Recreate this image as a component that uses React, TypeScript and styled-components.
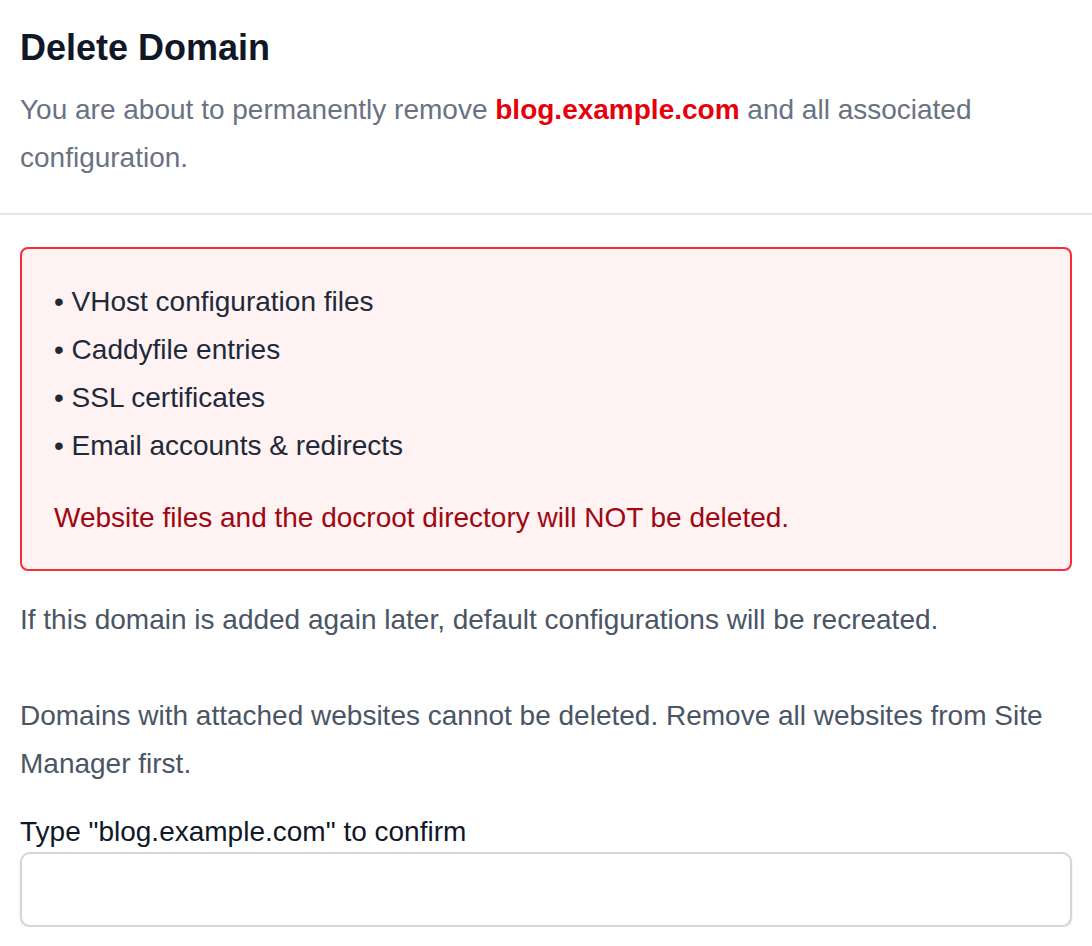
import React from "react";
import styled, { createGlobalStyle } from "styled-components";

const GlobalStyle = createGlobalStyle`
  html, body {
    margin: 0;
    padding: 0;
    background: #ffffff;
  }
  body {
    font-family: "Liberation Sans", Arial, sans-serif;
    -webkit-font-smoothing: antialiased;
  }
  * {
    box-sizing: border-box;
  }
`;

const Dialog = styled.div`
  width: 1092px;
  background: #ffffff;
`;

const Header = styled.header`
  padding: 28px 20px 31px;
  border-bottom: 2px solid #e5e7eb;
`;

const Title = styled.h2`
  margin: 0;
  font-size: 36px;
  line-height: 40px;
  font-weight: 700;
  color: #101828;
`;

const Description = styled.p`
  margin: 18px 0 0;
  font-size: 28px;
  line-height: 48px;
  color: #6a7282;
`;

const DomainName = styled.strong`
  color: #e7000b;
  font-weight: 700;
`;

const Body = styled.div`
  padding: 32px 20px 0;
`;

const Alert = styled.div`
  border: 2px solid #fb2c36;
  border-radius: 8px;
  background: #fef2f2;
  padding: 29px 32px 27px;
`;

const List = styled.ul`
  margin: 0;
  padding: 0;
  list-style: none;
`;

const Item = styled.li`
  font-size: 28px;
  line-height: 48px;
  color: #1e2939;
`;

const AlertNote = styled.p`
  margin: 24px 0 0;
  font-size: 28px;
  line-height: 48px;
  color: #9f0712;
`;

const Info = styled.p<{ $gap?: number }>`
  margin: ${(p) => p.$gap ?? 0}px 0 0;
  font-size: 28px;
  line-height: 48px;
  color: #4a5565;
`;

const Field = styled.label`
  display: block;
  margin-top: 24px;
`;

const LabelText = styled.span`
  display: block;
  font-size: 28px;
  line-height: 40px;
  color: #101828;
`;

const Input = styled.input`
  display: block;
  width: 100%;
  height: 75px;
  margin: 0;
  padding: 0 20px;
  font-family: inherit;
  font-size: 28px;
  color: #101828;
  background: #ffffff;
  border: 2px solid #d1d5dc;
  border-radius: 10px;
  box-shadow: 0 2px 3px rgba(0, 0, 0, 0.08);
  outline: none;
`;

const removed = [
  "VHost configuration files",
  "Caddyfile entries",
  "SSL certificates",
  "Email accounts & redirects",
];

export default function App() {
  const domain = "blog.example.com";
  return (
    <>
      <GlobalStyle />
      <Dialog>
        <Header>
          <Title>Delete Domain</Title>
          <Description>
            You are about to permanently remove <DomainName>{domain}</DomainName> and all
            associated configuration.
          </Description>
        </Header>
        <Body>
          <Alert>
            <List>
              {removed.map((r) => (
                <Item key={r}>• {r}</Item>
              ))}
            </List>
            <AlertNote>Website files and the docroot directory will NOT be deleted.</AlertNote>
          </Alert>
          <Info $gap={25}>
            If this domain is added again later, default configurations will be recreated.
          </Info>
          <Info $gap={48}>
            Domains with attached websites cannot be deleted. Remove all websites from Site
            Manager first.
          </Info>
          <Field>
            <LabelText>Type "{domain}" to confirm</LabelText>
            <Input type="text" />
          </Field>
        </Body>
      </Dialog>
    </>
  );
}
